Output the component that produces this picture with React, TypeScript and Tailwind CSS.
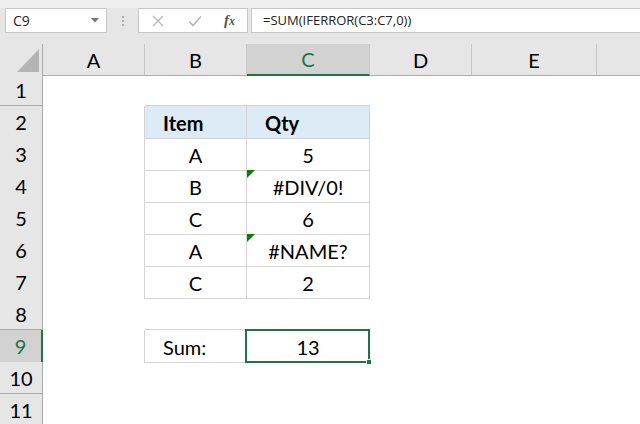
type Row = {
  n: number;
  b?: string;
  c?: string;
  head?: boolean;
  flag?: boolean;
  table?: boolean;
  topEdge?: boolean;
  sum?: boolean;
};

const rows: Row[] = [
  { n: 1, topEdge: true },
  { n: 2, b: "Item", c: "Qty", head: true, table: true },
  { n: 3, b: "A", c: "5", table: true },
  { n: 4, b: "B", c: "#DIV/0!", flag: true, table: true },
  { n: 5, b: "C", c: "6", table: true },
  { n: 6, b: "A", c: "#NAME?", flag: true, table: true },
  { n: 7, b: "C", c: "2", table: true },
  { n: 8, topEdge: true },
  { n: 9, b: "Sum:", c: "13", sum: true },
  { n: 10 },
  { n: 11 },
];

const cols = ["A", "B", "C", "D", "E", ""];

function FormulaBar() {
  return (
    <div className="h-[44px] bg-[#e6e6e6] relative">
      <div className="h-[8px] bg-[#efefef]" />
      <div className="flex items-center h-[25px] pl-[5px]">
        <div className="w-[102px] h-[25px] bg-white border border-[#c6c6c6] flex items-center justify-between pl-[7px] pr-[6px] text-[14px] text-[#222]">
          <span>C9</span>
          <svg width="8" height="5" viewBox="0 0 8 5" className="mr-[1px]">
            <polygon points="0,0 8,0 4,4.5" fill="#777" />
          </svg>
        </div>
        <div className="w-[31px] flex flex-col items-center gap-[2px]">
          <span className="w-[2px] h-[2px] bg-[#a8a8a8]" />
          <span className="w-[2px] h-[2px] bg-[#a8a8a8]" />
          <span className="w-[2px] h-[2px] bg-[#a8a8a8]" />
        </div>
        <div className="w-[110px] h-[25px] bg-white border border-[#c6c6c6] flex items-center pl-[13px]">
          <svg width="12" height="12" viewBox="0 0 12 12">
            <path d="M1 1 L11 11 M11 1 L1 11" stroke="#b8b8b8" strokeWidth="1.4" fill="none" />
          </svg>
          <svg width="14" height="12" viewBox="0 0 14 12" className="ml-[24px]">
            <path d="M1 6.5 L5 10.5 L13 1.5" stroke="#b8b8b8" strokeWidth="1.6" fill="none" />
          </svg>
          <span className="ml-[22px] italic font-bold text-[15px] text-[#555] font-['Liberation_Serif',serif]">
            f<span className="text-[12px]">x</span>
          </span>
        </div>
        <div className="ml-[3px] flex-1 h-[25px] bg-white border border-[#c6c6c6] border-r-0 flex items-center pl-[11px] text-[13px] text-[#222]">
          =SUM(IFERROR(C3:C7,0))
        </div>
      </div>
    </div>
  );
}

function ColumnHeaders() {
  return (
    <div className="grid grid-cols-[43px_102px_102px_123px_102px_125px_1fr] h-[30px] text-[20px]">
      <div className="border-r border-b border-[#ababab] bg-[#e6e6e6] flex items-end justify-end pr-[3px] pb-[3px]">
        <svg width="22" height="23" viewBox="0 0 22 23">
          <polygon points="22,0 22,23 0,23" fill="#b4b4b4" />
        </svg>
      </div>
      {cols.map((c, i) =>
        c === "C" ? (
          <div
            key={i}
            className="bg-[#d2d2d2] border-r border-[#c6c6c6] border-b-2 border-b-[#217346] flex items-center justify-center text-[#217346]"
          >
            {c}
          </div>
        ) : (
          <div
            key={i}
            className={
              i === cols.length - 1
                ? "bg-[#e6e6e6] border-b border-[#ababab] flex items-center justify-center"
                : "bg-[#e6e6e6] border-r border-[#c6c6c6] border-b border-b-[#ababab] flex items-center justify-center"
            }
          >
            {c}
          </div>
        )
      )}
    </div>
  );
}

function Flag() {
  return (
    <svg width="8" height="8" viewBox="0 0 8 8" className="absolute left-0 top-0">
      <polygon points="0,0 8,0 0,8" fill="#0f7b0f" />
    </svg>
  );
}

function SheetRow({ r }: { r: Row }) {
  const boxed = r.table || r.sum;
  const line = "border-[#d4d4d4]";
  return (
    <div className="grid grid-cols-[43px_102px_102px_123px_102px_125px_1fr] h-8 text-[20px] text-black">
      {r.sum ? (
        <div className="bg-[#d2d2d2] border-b border-b-[#ababab] border-r-2 border-r-[#217346] flex items-center justify-center text-[#217346]">
          {r.n}
        </div>
      ) : (
        <div className="bg-[#e6e6e6] border-b border-r border-[#ababab] flex items-center justify-center">
          {r.n}
        </div>
      )}
      <div className={boxed ? `border-r ${line}` : ""} />
      <div
        className={
          boxed
            ? `border-r border-b ${line} flex items-center pt-[2px] ${
                r.head || r.sum ? "pl-[18px]" : "justify-center"
              } ${r.head ? "bg-[#ddebf7] font-bold" : ""}`
            : r.topEdge
            ? `border-b ${line}`
            : ""
        }
      >
        {r.b}
      </div>
      <div
        className={
          boxed
            ? `relative border-r border-b ${line} flex items-center pt-[2px] ${
                r.head ? "pl-[18px] bg-[#ddebf7] font-bold" : "justify-center"
              }`
            : r.topEdge
            ? `border-b ${line}`
            : ""
        }
      >
        {r.flag && <Flag />}
        {r.c}
        {r.sum && (
          <div className="absolute -left-[2px] -top-[1px] -right-[1px] -bottom-[1px] border-2 border-[#217346]">
            <span className="absolute -right-[4px] -bottom-[4px] w-[6px] h-[6px] bg-[#217346] border border-white" />
          </div>
        )}
      </div>
      <div />
      <div />
      <div />
    </div>
  );
}

export default function App() {
  return (
    <div className="w-[640px] h-[424px] overflow-hidden bg-white font-['Lato',sans-serif]">
      <div className="font-['Open_Sans',sans-serif]">
        <FormulaBar />
      </div>
      <ColumnHeaders />
      {rows.map((r) => (
        <SheetRow key={r.n} r={r} />
      ))}
    </div>
  );
}
